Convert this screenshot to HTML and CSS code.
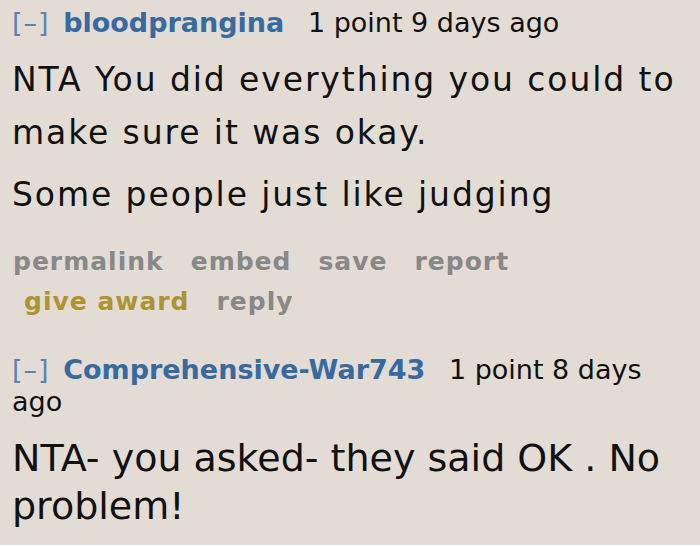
FILE: index.html
```html
<!DOCTYPE html>
<html>
<head>
<meta charset="utf-8">
<link rel="stylesheet" href="styles.css">
</head>
<body>
<div class="comment first">
  <p class="tagline"><span class="expand">[–]</span> <a class="author">bloodprangina</a> <span class="score">1 point 9 days ago</span></p>
  <div class="md">
    <p class="para">NTA You did everything you could to make sure it was okay.</p>
    <p class="para">Some people just like judging</p>
  </div>
  <ul class="buttons">
    <li class="btn">permalink</li>
    <li class="btn">embed</li>
    <li class="btn">save</li>
    <li class="btn">report</li>
    <li class="btn award">give award</li>
    <li class="btn">reply</li>
  </ul>
</div>
<div class="comment second">
  <p class="tagline"><span class="expand">[–]</span> <a class="author">Comprehensive-War743</a> 1 point 8 days ago</p>
  <div class="md">
    <p class="para">NTA- you asked- they said OK . No problem!</p>
  </div>
</div>
</body>
</html>
```
FILE: styles.css
```css
html, body {
  margin: 0;
  padding: 0;
  background: #e2dcd5;
}
body {
  font-family: "DejaVu Sans", Verdana, sans-serif;
  color: #111;
  width: 700px;
  height: 545px;
  overflow: hidden;
}
.comment {
  padding: 0 0 0 12px;
}
.tagline {
  margin: 0;
  font-size: 27px;
  line-height: 32px;
  color: #111;
}
.first .tagline {
  padding-top: 7px;
}
.expand {
  color: #5b83b0;
  letter-spacing: 1px;
  margin-right: 5px;
}
.author {
  color: #386a9e;
  font-weight: bold;
  margin-right: 15px;
}
.score {
  color: #111;
}
.md .para {
  margin: 0;
}
.first .md {
  padding-top: 14px;
}
.first .md .para {
  font-size: 33px;
  line-height: 53px;
  letter-spacing: 1.9px;
}
.first .md .para + .para {
  margin-top: 9px;
}
.buttons {
  list-style: none;
  margin: 21px 0 0 0;
  padding: 0 0 0 1px;
  display: flex;
  flex-wrap: wrap;
  column-gap: 27px;
  font-size: 25px;
  line-height: 40px;
  font-weight: bold;
  letter-spacing: 1px;
  width: 540px;
}
.btn {
  color: #888888;
}
.btn.award {
  color: #ae9332;
  margin-left: 11px;
}
.second {
  margin-top: 32px;
}
.second .md {
  padding-top: 16px;
}
.second .md .para {
  font-size: 38px;
  line-height: 48px;
}
```
